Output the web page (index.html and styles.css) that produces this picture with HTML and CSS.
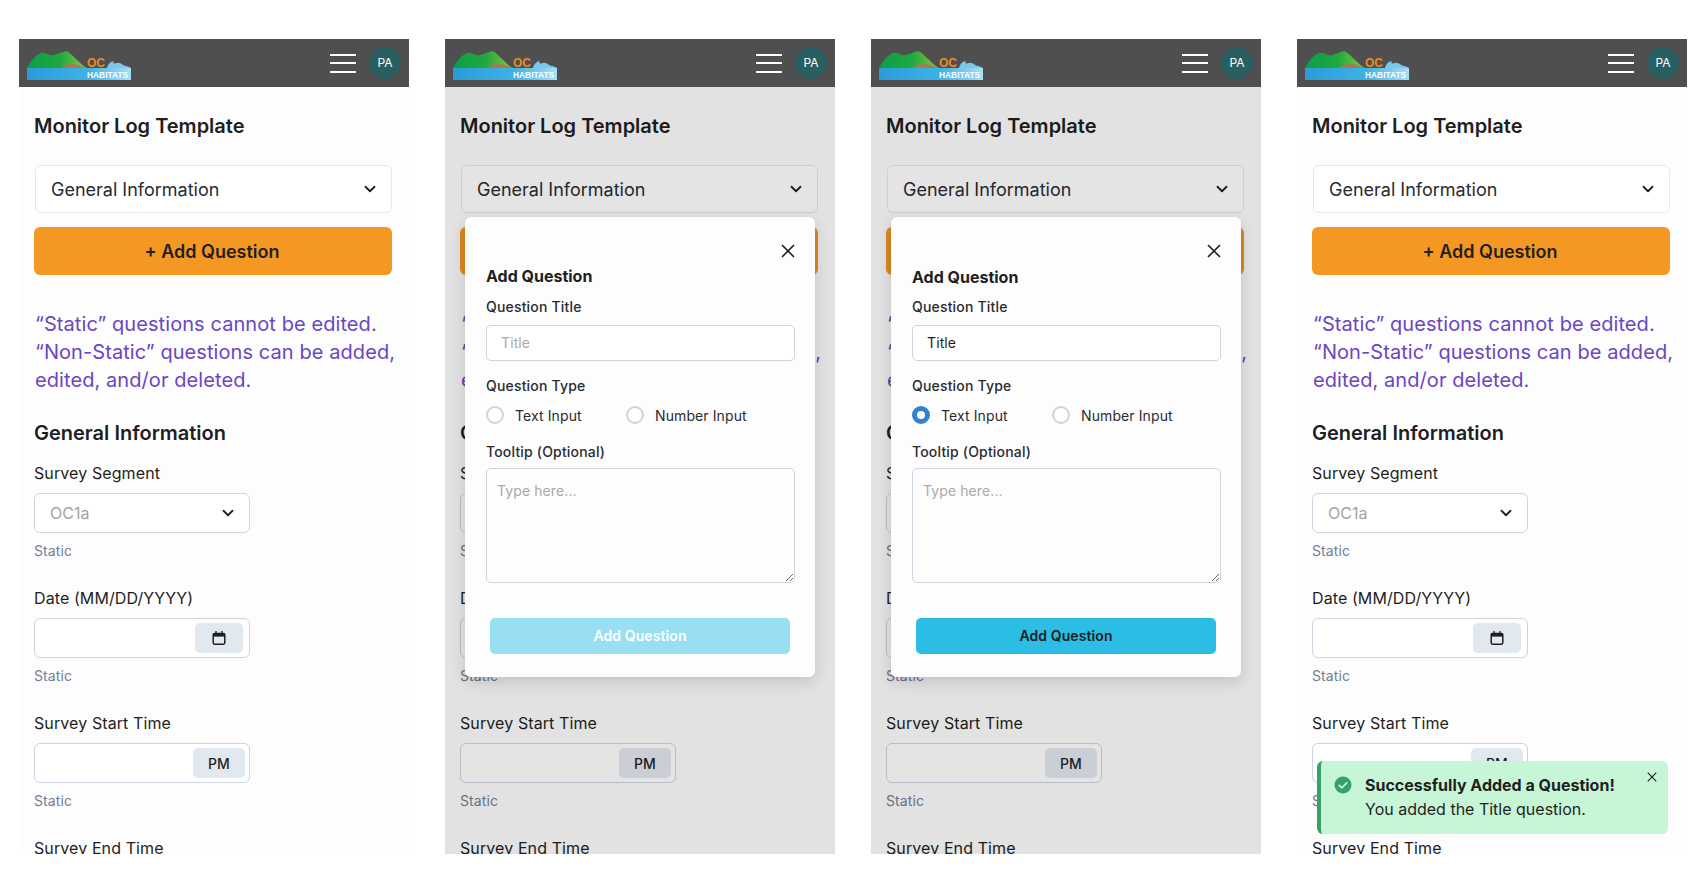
FILE: index.html
```html
<!DOCTYPE html>
<html lang="en">
<head>
  <meta charset="UTF-8" />
  <meta name="viewport" content="width=device-width, initial-scale=1.0"/>
  <title>Monitor Log Template</title>
  <link rel="stylesheet" href="styles.css">
</head>
<body>
  <svg class="defs" width="0" height="0" aria-hidden="true">
    <defs>
      <linearGradient id="hill" x1="0" x2="1" y1="0" y2="0">
        <stop offset="0" stop-color="#0d9e48"/>
        <stop offset="0.55" stop-color="#1fa83f"/>
        <stop offset="1" stop-color="#8cc63f"/>
      </linearGradient>
      <linearGradient id="sea" x1="0" x2="1" y1="0" y2="0">
        <stop offset="0" stop-color="#2b9bd8"/>
        <stop offset="0.6" stop-color="#3cb4e8"/>
        <stop offset="1" stop-color="#a8def5"/>
      </linearGradient>
      <symbol id="logo" viewBox="0 0 104 29">
        <path d="M0 17 C3 11 7 6 12 3 C14 1 16 2 18 2 C21 3 24 5 27 4 C31 3 35 1 39 0 C42 1 45 4 48 7 C52 10 54 14 60 17 Z" fill="url(#hill)"/>
        <path d="M33 17 C38 14 43 12 47 13 C51 14 55 15 60 17 Z" fill="#a07c50"/>
        <path d="M80 17 C81 13 84 10 87 10 C85 12 87 13 90 12 C94 11 96 15 99 15 C101 15 102 16 104 17 Z" fill="#7cc8ec"/>
        <rect x="0" y="17" width="104" height="12" fill="url(#sea)"/>
        <text x="60" y="16" class="logo-oc">OC</text>
        <text x="60" y="26.5" class="logo-hab">HABITATS</text>
      </symbol>
      <symbol id="chev" viewBox="0 0 24 24">
        <path d="M6 9l6 6 6-6" fill="none" stroke="currentColor" stroke-width="2.4" stroke-linecap="round" stroke-linejoin="round"/>
      </symbol>
      <symbol id="cal" viewBox="0 0 14 14">
        <path d="M4 0v3M10 0v3" stroke="currentColor" stroke-width="1.3" fill="none"/>
        <rect x="1.2" y="2.4" width="11.6" height="10.8" rx="1.4" fill="none" stroke="currentColor" stroke-width="1.5"/>
        <rect x="1.2" y="2.4" width="11.6" height="3.2" fill="currentColor"/>
      </symbol>
      <symbol id="cross" viewBox="0 0 14 14">
        <path d="M1 1l12 12M13 1L1 13" fill="none" stroke="currentColor" stroke-width="1.6"/>
      </symbol>
    </defs>
  </svg>

  <div class="board">

    <!-- plain page -->
    <div class="phone">
      <header class="topbar">
        <svg class="logo"><use href="#logo"/></svg>
        <div class="burger"><span></span><span></span><span></span></div>
        <div class="avatar">PA</div>
      </header>
      <main class="content">
        <h1 class="page-title">Monitor Log Template</h1>
        <div class="section-select">General Information<svg class="chev"><use href="#chev"/></svg></div>
        <button class="add-btn">+ Add Question</button>
        <p class="note">“Static” questions cannot be edited.<br>“Non-Static” questions can be added,<br>edited, and/or deleted.</p>
        <h2 class="section-title">General Information</h2>
        <div class="field first">
          <label>Survey Segment</label>
          <div class="control"><span class="muted">OC1a</span><svg class="chev"><use href="#chev"/></svg></div>
          <small>Static</small>
        </div>
        <div class="field">
          <label>Date (MM/DD/YYYY)</label>
          <div class="control"><span class="addon addon-date"><svg class="cal"><use href="#cal"/></svg></span></div>
          <small>Static</small>
        </div>
        <div class="field">
          <label>Survey Start Time</label>
          <div class="control"><span class="addon">PM</span></div>
          <small>Static</small>
        </div>
        <div class="field">
          <label>Survey End Time</label>
        </div>
      </main>
    </div>

    <!-- modal, empty -->
    <div class="phone">
      <header class="topbar">
        <svg class="logo"><use href="#logo"/></svg>
        <div class="burger"><span></span><span></span><span></span></div>
        <div class="avatar">PA</div>
      </header>
      <main class="content">
        <h1 class="page-title">Monitor Log Template</h1>
        <div class="section-select">General Information<svg class="chev"><use href="#chev"/></svg></div>
        <button class="add-btn">+ Add Question</button>
        <p class="note">“Static” questions cannot be edited.<br>“Non-Static” questions can be added,<br>edited, and/or deleted.</p>
        <h2 class="section-title">General Information</h2>
        <div class="field first">
          <label>Survey Segment</label>
          <div class="control"><span class="muted">OC1a</span><svg class="chev"><use href="#chev"/></svg></div>
          <small>Static</small>
        </div>
        <div class="field">
          <label>Date (MM/DD/YYYY)</label>
          <div class="control"><span class="addon addon-date"><svg class="cal"><use href="#cal"/></svg></span></div>
          <small>Static</small>
        </div>
        <div class="field">
          <label>Survey Start Time</label>
          <div class="control"><span class="addon">PM</span></div>
          <small>Static</small>
        </div>
        <div class="field">
          <label>Survey End Time</label>
        </div>
      </main>
      <div class="scrim"></div>
      <div class="modal">
        <svg class="modal-close"><use href="#cross"/></svg>
        <h3 class="modal-title">Add Question</h3>
        <label class="modal-label">Question Title</label>
        <input class="modal-input" type="text" placeholder="Title" />
        <label class="modal-label type-label">Question Type</label>
        <div class="radios">
          <span class="radio"></span><span class="radio-text">Text Input</span>
          <span class="radio"></span><span class="radio-text">Number Input</span>
        </div>
        <label class="modal-label tip-label">Tooltip (Optional)</label>
        <textarea class="modal-area" placeholder="Type here..."></textarea>
        <button class="modal-btn" disabled>Add Question</button>
      </div>
    </div>

    <!-- modal, filled in -->
    <div class="phone">
      <header class="topbar">
        <svg class="logo"><use href="#logo"/></svg>
        <div class="burger"><span></span><span></span><span></span></div>
        <div class="avatar">PA</div>
      </header>
      <main class="content">
        <h1 class="page-title">Monitor Log Template</h1>
        <div class="section-select">General Information<svg class="chev"><use href="#chev"/></svg></div>
        <button class="add-btn">+ Add Question</button>
        <p class="note">“Static” questions cannot be edited.<br>“Non-Static” questions can be added,<br>edited, and/or deleted.</p>
        <h2 class="section-title">General Information</h2>
        <div class="field first">
          <label>Survey Segment</label>
          <div class="control"><span class="muted">OC1a</span><svg class="chev"><use href="#chev"/></svg></div>
          <small>Static</small>
        </div>
        <div class="field">
          <label>Date (MM/DD/YYYY)</label>
          <div class="control"><span class="addon addon-date"><svg class="cal"><use href="#cal"/></svg></span></div>
          <small>Static</small>
        </div>
        <div class="field">
          <label>Survey Start Time</label>
          <div class="control"><span class="addon">PM</span></div>
          <small>Static</small>
        </div>
        <div class="field">
          <label>Survey End Time</label>
        </div>
      </main>
      <div class="scrim"></div>
      <div class="modal">
        <svg class="modal-close"><use href="#cross"/></svg>
        <h3 class="modal-title filled">Add Question</h3>
        <label class="modal-label">Question Title</label>
        <input class="modal-input" type="text" value="Title" />
        <label class="modal-label type-label">Question Type</label>
        <div class="radios">
          <span class="radio checked"></span><span class="radio-text">Text Input</span>
          <span class="radio"></span><span class="radio-text">Number Input</span>
        </div>
        <label class="modal-label tip-label">Tooltip (Optional)</label>
        <textarea class="modal-area" placeholder="Type here..."></textarea>
        <button class="modal-btn ready">Add Question</button>
      </div>
    </div>

    <!-- after adding -->
    <div class="phone">
      <header class="topbar">
        <svg class="logo"><use href="#logo"/></svg>
        <div class="burger"><span></span><span></span><span></span></div>
        <div class="avatar">PA</div>
      </header>
      <main class="content">
        <h1 class="page-title">Monitor Log Template</h1>
        <div class="section-select">General Information<svg class="chev"><use href="#chev"/></svg></div>
        <button class="add-btn">+ Add Question</button>
        <p class="note">“Static” questions cannot be edited.<br>“Non-Static” questions can be added,<br>edited, and/or deleted.</p>
        <h2 class="section-title">General Information</h2>
        <div class="field first">
          <label>Survey Segment</label>
          <div class="control"><span class="muted">OC1a</span><svg class="chev"><use href="#chev"/></svg></div>
          <small>Static</small>
        </div>
        <div class="field">
          <label>Date (MM/DD/YYYY)</label>
          <div class="control"><span class="addon addon-date"><svg class="cal"><use href="#cal"/></svg></span></div>
          <small>Static</small>
        </div>
        <div class="field">
          <label>Survey Start Time</label>
          <div class="control"><span class="addon">PM</span></div>
          <small>Static</small>
        </div>
        <div class="field">
          <label>Survey End Time</label>
        </div>
      </main>
      <div class="toast">
        <svg class="toast-icon" viewBox="0 0 18 18">
          <circle cx="9" cy="9" r="8.5" fill="#38a169"/>
          <path d="M5.2 9.3l2.6 2.5 5-5" fill="none" stroke="#c6f6d5" stroke-width="1.7" stroke-linecap="round" stroke-linejoin="round"/>
        </svg>
        <div class="toast-body">
          <div class="toast-title">Successfully Added a Question!</div>
          <div class="toast-text">You added the Title question.</div>
        </div>
        <svg class="toast-close"><use href="#cross"/></svg>
      </div>
    </div>

  </div>
</body>
</html>
```

FILE: styles.css
```css
* {
  box-sizing: border-box;
}
body {
  margin: 0;
  background: #fff;
  font-family: Inter, 'Noto Sans', sans-serif;
  color: #1f1f22;
}
.defs {
  position: absolute;
}
.board {
  display: flex;
  gap: 36px;
  padding: 39px 19px;
}
.phone {
  position: relative;
  width: 390px;
  height: 815px;
  overflow: hidden;
  background: #fdfdfe;
}

/* top bar */
.topbar {
  position: relative;
  z-index: 3;
  height: 48px;
  background: #4f4f4f;
  display: flex;
  align-items: center;
  padding: 0 8px;
}
.logo {
  width: 104px;
  height: 29px;
  margin-top: 5px;
}
.logo-oc {
  font: bold 12px 'Liberation Sans', sans-serif;
  fill: #ef8a1d;
}
.logo-hab {
  font: bold 8.4px 'Liberation Sans', sans-serif;
  fill: #fff;
}
.burger {
  margin-left: auto;
  width: 26px;
  display: flex;
  flex-direction: column;
  gap: 6.5px;
}
.burger span {
  height: 2px;
  background: #fff;
}
.avatar {
  width: 32px;
  height: 32px;
  margin-left: 13px;
  padding-bottom: 1px;
  border-radius: 50%;
  background: #2a5f62;
  color: #fff;
  font-size: 12px;
  display: flex;
  align-items: center;
  justify-content: center;
}

/* page */
.content {
  padding: 0 15px;
}
.page-title {
  margin: 27px 0 0;
  font-size: 20px;
  line-height: 24px;
  font-weight: 600;
}
.section-select {
  display: flex;
  align-items: center;
  justify-content: space-between;
  height: 48px;
  margin: 27px 2px 0 1px;
  padding: 0 12px 0 15px;
  background: #fff;
  border: 1px solid #e2e8f0;
  border-radius: 6px;
  font-size: 18px;
  color: #2b2b2f;
}
.chev {
  width: 18px;
  height: 18px;
  color: #1f1f22;
}
.add-btn {
  display: block;
  width: 358px;
  height: 48px;
  margin-top: 14px;
  padding: 0 2px 0 0;
  background: #f59823;
  border: none;
  border-radius: 6px;
  font: 600 18px Inter, sans-serif;
  color: #1f1f22;
}
.note {
  margin: 35px 0 0 1px;
  font-size: 20px;
  line-height: 28px;
  letter-spacing: 0.08px;
  color: #6b46c1;
  white-space: nowrap;
}
.section-title {
  margin: 27px 0 0;
  font-size: 20px;
  line-height: 24px;
  font-weight: 600;
}
.field {
  margin-top: 25px;
}
.field.first {
  margin-top: 16px;
}
.field label {
  display: block;
  font-size: 16px;
  line-height: 24px;
  letter-spacing: 0.1px;
}
.control {
  display: flex;
  align-items: center;
  justify-content: space-between;
  width: 216px;
  height: 40px;
  margin-top: 8px;
  padding: 0 15px;
  background: #fff;
  border: 1px solid #cbd5e0;
  border-radius: 6px;
  font-size: 16px;
}
.control .chev {
  margin-right: -3px;
}
.muted {
  color: #a3a3a3;
}
.addon {
  display: flex;
  align-items: center;
  justify-content: center;
  width: 52px;
  height: 30px;
  margin-left: auto;
  margin-right: -11px;
  background: #e2e8f0;
  border-radius: 5px;
  font-size: 14px;
  font-weight: 500;
}
.addon-date {
  width: 48px;
  margin-right: -9px;
}
.cal {
  width: 14px;
  height: 14px;
}
.field small {
  display: block;
  margin-top: 8px;
  font-size: 14px;
  line-height: 20px;
  letter-spacing: 0.1px;
  color: #718096;
}

/* modal */
.scrim {
  position: absolute;
  inset: 48px 0 0 0;
  z-index: 1;
  background: rgba(0, 0, 0, 0.105);
}
.modal {
  position: absolute;
  z-index: 2;
  top: 178px;
  left: 20px;
  width: 350px;
  height: 460px;
  padding: 0 20px 0 21px;
  background: #fdfdfe;
  border-radius: 6px;
  box-shadow: 0 5px 15px rgba(0, 0, 0, 0.14);
}
.modal-close {
  position: absolute;
  top: 27px;
  right: 20px;
  width: 14px;
  height: 14px;
  color: #1f1f22;
}
.modal-title {
  margin: 48px 0 0;
  font-size: 16px;
  line-height: 22px;
  font-weight: 700;
}
.modal-title.filled {
  padding-top: 1px;
  margin-bottom: -1px;
}
.modal-label {
  display: block;
  margin-top: 10px;
  font-size: 14px;
  line-height: 20px;
  letter-spacing: 0.18px;
  font-weight: 500;
  color: #2b2b2f;
}
.type-label {
  margin-top: 15px;
}
.tip-label {
  margin-top: 17px;
}
.modal-input {
  display: block;
  width: 100%;
  height: 36px;
  margin-top: 8px;
  padding: 0 14px 2px;
  background: #fff;
  border: 1px solid #cbd5e0;
  border-radius: 5px;
  font: 14px Inter, sans-serif;
  letter-spacing: 0.1px;
  color: #1f1f22;
}
.modal-input::placeholder,
.modal-area::placeholder {
  color: #a9a9a9;
  opacity: 1;
}
.radios {
  display: flex;
  align-items: center;
  height: 20px;
  margin-top: 9px;
}
.radio {
  width: 18px;
  height: 18px;
  border: 2px solid #cbd5e0;
  border-radius: 50%;
  background: #fff;
}
.radio.checked {
  border: 5px solid #3182ce;
}
.radio-text {
  width: 111px;
  margin-left: 11px;
  font-size: 14px;
  letter-spacing: 0.1px;
  color: #2b2b2f;
}
.modal-area {
  display: block;
  width: 100%;
  height: 115px;
  margin-top: 6px;
  padding: 13px 10px;
  background: #fdfdfe;
  border: 1px solid #cbd5e0;
  border-radius: 5px;
  font: 14px Inter, sans-serif;
  letter-spacing: 0.1px;
}
.modal-btn {
  display: block;
  width: 300px;
  height: 36px;
  margin: 35px 0 0 4px;
  padding: 0 0 2px;
  background: #97dff1;
  border: none;
  border-radius: 5px;
  color: #fff;
  font: 600 14px Inter, sans-serif;
  letter-spacing: 0.1px;
}
.modal-btn.ready {
  background: #2bbde3;
  color: #1f1f22;
}

/* toast */
.toast {
  position: absolute;
  left: 20px;
  top: 722px;
  width: 351px;
  height: 73px;
  display: flex;
  padding: 12px 0 0 13px;
  background: #c6f6d5;
  border-left: 4px solid #38a169;
  border-radius: 6px;
}
.toast-icon {
  width: 18px;
  height: 18px;
  margin-top: 3px;
  flex: none;
}
.toast-body {
  margin-left: 13px;
}
.toast-title {
  font-size: 16px;
  line-height: 24px;
  font-weight: 700;
}
.toast-text {
  font-size: 16px;
  line-height: 24px;
}
.toast-close {
  position: absolute;
  top: 11px;
  right: 11px;
  width: 10px;
  height: 10px;
  color: #1f1f22;
}
```
